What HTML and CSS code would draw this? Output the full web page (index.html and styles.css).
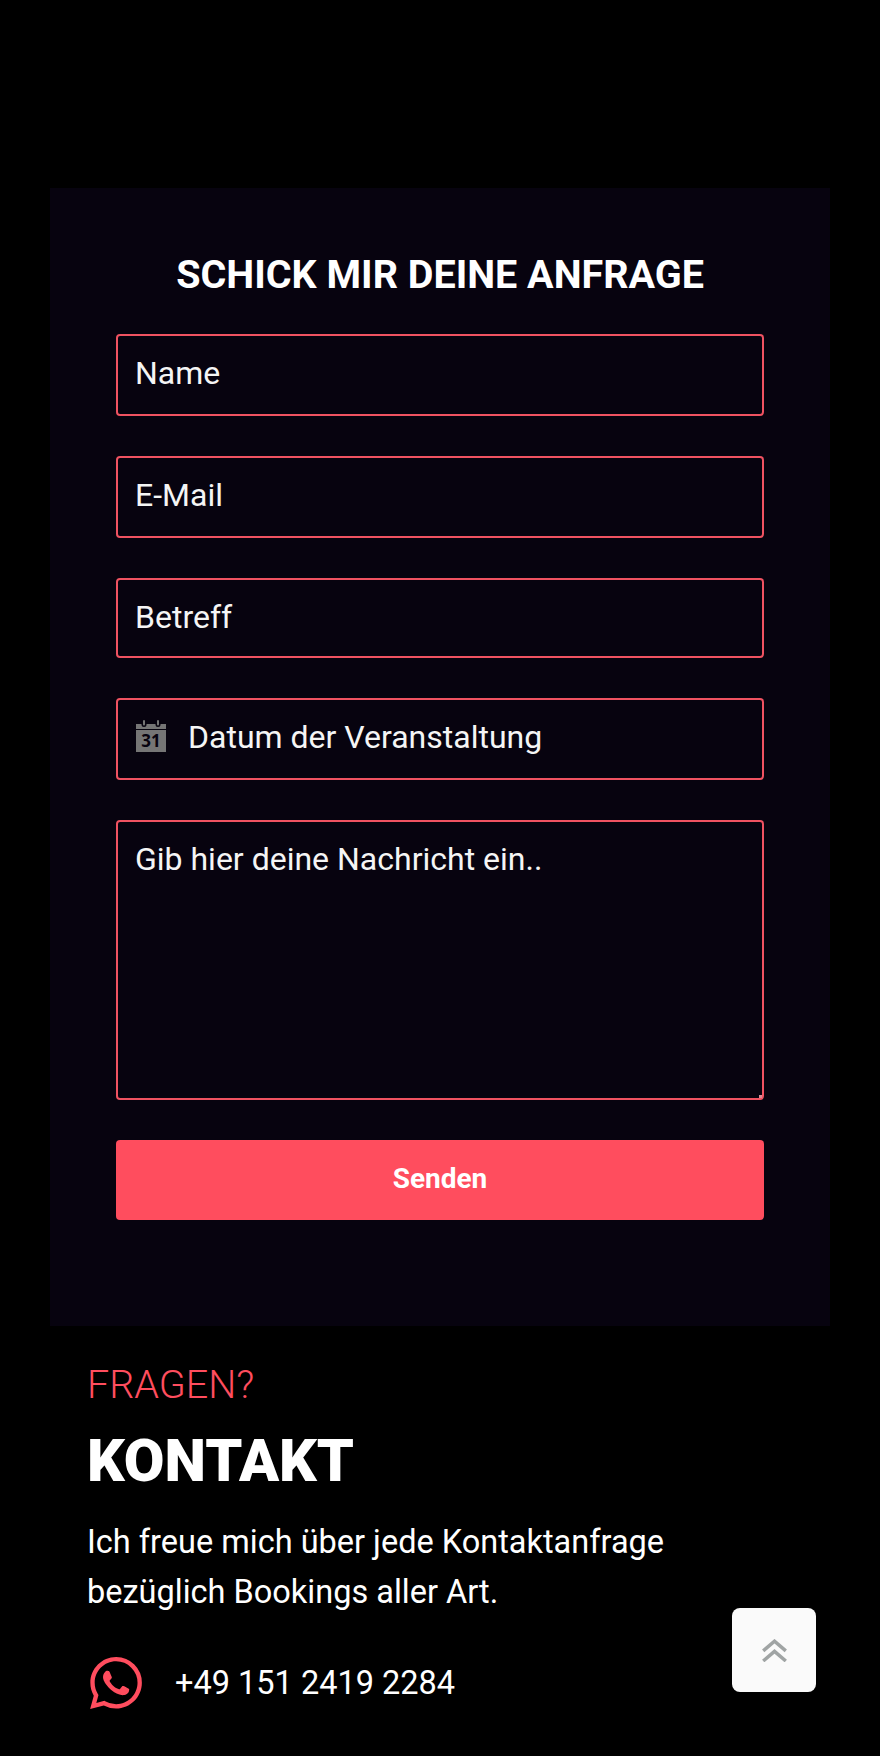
FILE: index.html
```html
<!DOCTYPE html>
<html lang="de">
<head>
    <meta charset="UTF-8">
    <meta name="viewport" content="width=device-width, initial-scale=1.0">
    <title>Kontakt</title>
    <link rel="stylesheet" href="styles.css">
</head>
<body>
    <div class="form-card">
        <h2 class="form-title">SCHICK MIR DEINE ANFRAGE</h2>
        <form class="contact-form">
            <input class="field" type="text" placeholder="Name">
            <input class="field" type="text" placeholder="E-Mail">
            <input class="field field-short" type="text" placeholder="Betreff">
            <div class="date-wrap">
                <svg class="date-icon" viewBox="0 0 30 32" aria-hidden="true">
                    <path fill="#757575" d="M0 4h30v28H0z"/>
                    <rect x="0" y="9" width="30" height="1" fill="#07030f"/>
                    <rect x="5.500" y="0" width="5" height="7" rx="2.500" fill="#07030f"/>
                    <rect x="19.500" y="0" width="5" height="7" rx="2.500" fill="#07030f"/>
                    <rect x="7" y="0" width="2" height="5.500" rx="1" fill="#757575"/>
                    <rect x="21" y="0" width="2" height="5.500" rx="1" fill="#757575"/>
                    <text class="date-icon-num" x="15" y="27" text-anchor="middle">31</text>
                </svg>
                <input class="field field-date" type="text" placeholder="Datum der Veranstaltung">
            </div>
            <textarea class="field field-area" placeholder="Gib hier deine Nachricht ein.."></textarea>
            <button class="send-button" type="button">Senden</button>
        </form>
    </div>

    <div class="contact-info">
        <p class="contact-kicker">FRAGEN?</p>
        <h1 class="contact-title">KONTAKT</h1>
        <p class="contact-text">Ich freue mich über jede Kontaktanfrage bezüglich Bookings aller Art.</p>
        <div class="contact-phone">
            <svg class="phone-icon" viewBox="0 0 24 24" aria-hidden="true">
                <path fill="#ff4d5e" d="M17.472 14.382c-.297-.149-1.758-.867-2.030-.967-.273-.099-.471-.148-.670.150-.197.297-.767.966-.940 1.164-.173.199-.347.223-.644.075-.297-.150-1.255-.463-2.390-1.475-.883-.788-1.480-1.761-1.653-2.059-.173-.297-.018-.458.130-.606.134-.133.298-.347.446-.520.149-.174.198-.298.298-.497.099-.198.050-.371-.025-.520-.075-.149-.669-1.612-.916-2.207-.242-.579-.487-.500-.669-.510-.173-.008-.371-.010-.570-.010-.198 0-.520.074-.792.372-.272.297-1.040 1.016-1.040 2.479 0 1.462 1.065 2.875 1.213 3.074.149.198 2.096 3.200 5.077 4.487.709.306 1.262.489 1.694.625.712.227 1.360.195 1.871.118.571-.085 1.758-.719 2.006-1.413.248-.694.248-1.289.173-1.413-.074-.124-.272-.198-.570-.347m-5.421 7.403h-.004a9.870 9.870 0 0 1-5.031-1.378l-.361-.214-3.741.982.998-3.648-.235-.374a9.860 9.860 0 0 1-1.510-5.260c.001-5.450 4.436-9.884 9.888-9.884 2.640 0 5.122 1.030 6.988 2.898a9.825 9.825 0 0 1 2.893 6.994c-.003 5.450-4.437 9.884-9.885 9.884m8.413-18.297A11.815 11.815 0 0 0 12.050 0C5.495 0 .160 5.335.157 11.892c0 2.096.547 4.142 1.588 5.945L.057 24l6.305-1.654a11.882 11.882 0 0 0 5.683 1.448h.005c6.554 0 11.890-5.335 11.893-11.893a11.821 11.821 0 0 0-3.480-8.413z"/>
            </svg>
            <span class="phone-number">+49 151 2419 2284</span>
        </div>
    </div>

    <a class="to-top" href="#">
        <svg viewBox="0 0 25 23" aria-hidden="true">
            <path fill="none" stroke="#a0a4a4" stroke-width="3.500" d="M1.200 11.800 12.500 2.200l11.300 9.600M1.200 22l11.300-9.600L23.800 22"/>
        </svg>
    </a>
</body>
</html>
```

FILE: styles.css
```css
html, body {
    height: 100%;
}

body {
    margin: 0;
    background-color: #000;
    color: #fff;
    font-family: Roboto, sans-serif;
    overflow: hidden;
    padding-top: 188px;
    box-sizing: border-box;
}

.form-card {
    margin: 0 50px;
    height: 1138px;
    box-sizing: border-box;
    padding: 64px 66px 0;
    background-color: #07030f;
}

.form-title {
    margin: 0 0 36px;
    font-size: 39.500px;
    line-height: 46px;
    font-weight: 700;
    text-align: center;
}

.contact-form {
    display: flex;
    flex-direction: column;
    gap: 40px;
}

.field {
    display: block;
    width: 100%;
    height: 82px;
    box-sizing: border-box;
    padding: 0 17px 4px;
    background-color: transparent;
    border: 2px solid #ef5261;
    border-radius: 4px;
    color: #fff;
    font-family: Roboto, sans-serif;
    font-size: 32px;
    outline: none;
}

.field::placeholder {
    color: #f5f5f5;
    opacity: 1;
}

.field-short {
    height: 80px;
    padding-bottom: 2px;
}

.date-wrap {
    position: relative;
}

.field-date {
    padding-left: 70px;
}

.date-icon {
    position: absolute;
    left: 20px;
    top: 22px;
    width: 30px;
    height: 32px;
}

.date-icon-num {
    font-family: "Noto Sans", sans-serif;
    font-size: 17px;
    font-weight: 700;
    fill: #07030f;
}

.field-area {
    height: 280px;
    padding-top: 19px;
    line-height: 36px;
    resize: vertical;
}

.field-area::-webkit-resizer {
    background: linear-gradient(#d98a94, #d98a94) no-repeat right bottom / 3px 3px;
}

.send-button {
    height: 80px;
    border: none;
    border-radius: 4px;
    background-color: #ff4d5e;
    color: #fff;
    font-family: Roboto, sans-serif;
    font-size: 28px;
    font-weight: 700;
    padding: 0 0 4px;
    cursor: pointer;
}

.contact-info {
    padding: 33px 87px 0;
}

.contact-kicker {
    margin: 0;
    color: #ff4d5e;
    font-size: 39.500px;
    line-height: 52px;
    font-weight: 300;
}

.contact-title {
    margin: 15px 0 21px;
    font-size: 59px;
    line-height: 70px;
    font-weight: 900;
}

.contact-text {
    margin: 0 0 40px;
    font-size: 32.500px;
    line-height: 50px;
}

.contact-phone {
    display: flex;
    align-items: center;
    gap: 33px;
}

.phone-icon {
    width: 52px;
    height: 52px;
    margin-left: 3px;
}

.phone-number {
    font-size: 32.500px;
}

.to-top {
    position: fixed;
    right: 64px;
    bottom: 64px;
    width: 84px;
    height: 84px;
    display: flex;
    align-items: center;
    justify-content: center;
    background-color: #fafafa;
    border-radius: 8px;
}

.to-top svg {
    width: 25px;
    height: 23px;
    margin: 1px 0 0 1px;
}
```
